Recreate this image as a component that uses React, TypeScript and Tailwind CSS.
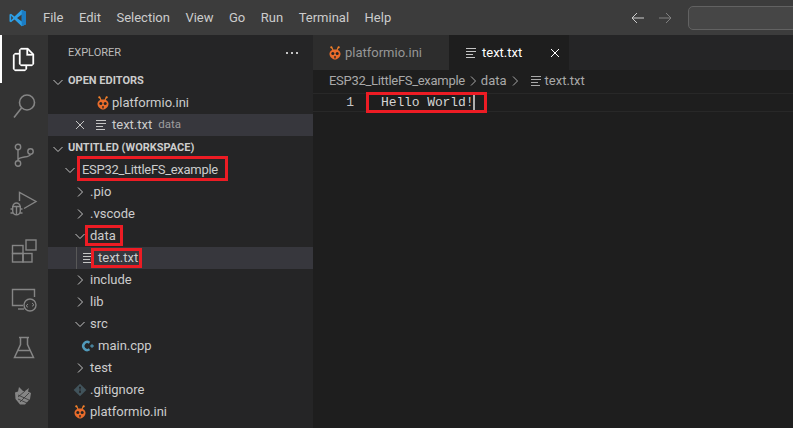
import React from "react";

const ui = "font-['Roboto','Noto_Sans',sans-serif]";

const Chevron = ({ open, className = "" }: { open?: boolean; className?: string }) => (
  <svg width="16" height="16" viewBox="0 0 16 16" fill="none" stroke="#c5c5c5" strokeWidth="1" className={`shrink-0 ${className}`}>
    {open ? <path d="M3.500 6l4.500 4.500L12.500 6" /> : <path d="M6 3.500l4.500 4.500L6 12.500" />}
  </svg>
);

const AntIcon = ({ size = 16 }: { size?: number }) => (
  <svg width={size} height={size} viewBox="0 0 16 16" className="shrink-0">
    <path d="M4.500 2L6 5M11.500 2L10 5" stroke="#f5822a" strokeWidth="1.100" fill="none" />
    <circle cx="4.300" cy="2.300" r="1.100" fill="#f5822a" />
    <circle cx="11.700" cy="2.300" r="1.100" fill="#f5822a" />
    <path d="M8 4.500C4.500 4.500 2.500 6.500 2.500 9c0 2.800 3 5.500 5.500 5.500s5.500-2.700 5.500-5.500c0-2.500-2-4.500-5.500-4.500z" fill="#ea6c2b" />
    <circle cx="5.800" cy="8.500" r="1.500" fill="#252526" />
    <circle cx="10.200" cy="8.500" r="1.500" fill="#252526" />
    <rect x="7.300" y="11" width="1.400" height="2.400" fill="#252526" />
  </svg>
);

const TextIcon = ({ color = "#c5c5c5" }: { color?: string }) => (
  <svg width="16" height="16" viewBox="0 0 16 16" fill="none" stroke={color} strokeWidth="1" className="shrink-0">
    <path d="M3 3.500h10M3 6.500h10M3 9.500h7M3 12.500h9" />
  </svg>
);

const CppIcon = () => (
  <svg width="16" height="16" viewBox="0 0 16 16" fill="none" className="shrink-0">
    <path d="M9.500 4.700A4 4 0 1 0 9.500 11.300" stroke="#519aba" strokeWidth="2.400" />
    <path d="M10 8h4M12 6.200v3.600" stroke="#519aba" strokeWidth="1.200" />
  </svg>
);

const GitIcon = () => (
  <svg width="16" height="16" viewBox="0 0 16 16" className="shrink-0">
    <rect x="3.500" y="3.500" width="9" height="9" transform="rotate(45 8 8)" fill="#41535b" />
    <circle cx="8" cy="5.500" r="1" fill="#252526" />
    <circle cx="8" cy="10" r="1" fill="#252526" />
    <path d="M8 5.500V10" stroke="#252526" strokeWidth="0.800" />
  </svg>
);

const activity = [
  {
    active: true,
    icon: (
      <path d="M18 3h-7l-2 2v3H5L3 10v14l2 2h10l2-2v-3h5l2-2V9zM18 5.200L21.800 9H18zM15.500 24.500h-11v-15H9V19l2 2h4.500zM22.500 19.500h-12v-15H16.500V10.500h6z" fill="#fff" stroke="#fff" strokeWidth="0.300" />
    ),
  },
  { icon: <g fill="none" strokeWidth="1.600"><circle cx="17" cy="9.500" r="7.500" /><path d="M11.500 15L4 24.500" /></g> },
  { icon: <g fill="none" strokeWidth="1.400"><circle cx="8" cy="6" r="2.700" /><circle cx="8" cy="22.500" r="2.700" /><circle cx="20.500" cy="10.500" r="2.700" /><path d="M8 8.700v11M8 19c0-4 12.500-2 12.500-5.800" /></g> },
  { icon: <g fill="none" strokeWidth="1.400"><path d="M9.500 12V3.500L26 12.500l-12 7" /><path d="M3 17.500a3.500 3.500 0 0 1 7 0" /><path d="M2.700 17.500h7.600v4.500a3.800 3.800 0 0 1-7.600 0zM6.500 17.500v8M0.500 20h2.200M10.300 20h2.200M0.500 24h2.500M10 24h2.500" /></g> },
  { icon: <g fill="none" strokeWidth="1.400"><rect x="2.500" y="8.500" width="10.500" height="8" /><rect x="2.500" y="16.500" width="10.500" height="8.500" /><rect x="13" y="16.500" width="9" height="8.500" /><rect x="16" y="3" width="10" height="10" /></g> },
  { icon: <g fill="none" strokeWidth="1.400"><path d="M13 20.500H2.500v-16h22V12" /><path d="M8 24h6" /><circle cx="20" cy="20" r="6" /><path d="M18 19l-2 1.800 2 1.500M22 18l2 1.800-2 1.500" strokeWidth="1" /></g> },
  { icon: <g fill="none" strokeWidth="1.500"><path d="M9 4.500h10M10.500 4.500v7L4.500 24.500h19l-6-13v-7M8 17.500h12" /></g> },
  {
    icon: (
      <g stroke="none" fill="#858585">
        <path d="M5 11.500l3-1 1-4.500 4 4 2 0 4-3-1 3.500 3 1.500-1 6-5 5.500h-5l-4.500-5.500z" />
        <path d="M8 14l11 5M8 18l9 4M10 21l9-9M8 16l7-6" stroke="#333333" strokeWidth="0.800" fill="none" />
      </g>
    ),
  },
];

type Row = { label: string; depth: number; kind: "closed" | "open" | "text" | "cpp" | "git" | "ant"; selected?: boolean };

const tree: Row[] = [
  { label: ".pio", depth: 1, kind: "closed" },
  { label: ".vscode", depth: 1, kind: "closed" },
  { label: "data", depth: 1, kind: "open" },
  { label: "text.txt", depth: 2, kind: "text", selected: true },
  { label: "include", depth: 1, kind: "closed" },
  { label: "lib", depth: 1, kind: "closed" },
  { label: "src", depth: 1, kind: "open" },
  { label: "main.cpp", depth: 2, kind: "cpp" },
  { label: "test", depth: 1, kind: "closed" },
  { label: ".gitignore", depth: 1, kind: "git" },
  { label: "platformio.ini", depth: 1, kind: "ant" },
];

const TreeRow = ({ row }: { row: Row }) => (
  <div className={`relative flex h-[22px] items-center gap-[2px] text-[13px] ${row.depth === 2 ? "pl-[32px]" : "pl-[24px]"} ${row.selected ? "bg-[#37373d]" : ""}`}>
    {row.selected && <i className="absolute left-[28px] top-0 h-full w-px bg-[#585858]" />}
    {row.kind === "closed" && <Chevron />}
    {row.kind === "open" && <Chevron open />}
    {row.kind === "text" && <TextIcon />}
    {row.kind === "cpp" && <CppIcon />}
    {row.kind === "git" && <GitIcon />}
    {row.kind === "ant" && <AntIcon />}
    <span>{row.label}</span>
  </div>
);

const redBox = "absolute border-[3px] border-[#ed1c24]";

export default function App() {
  return (
    <div className={`relative flex h-[428px] w-[793px] flex-col overflow-hidden bg-[#1e1e1e] text-[#cccccc] ${ui}`}>
      {/* title bar */}
      <div className="flex h-[35px] shrink-0 items-center bg-[#3c3c3c] text-[13px]">
        <div className="flex w-[35px] justify-center pl-[1px]">
          <svg width="18" height="18" viewBox="0 0 18 18">
            <path d="M12.700.700L17 2.800v12.400l-4.300 2.100L5.500 10.500 2 13.200.500 12.500V5.500L2 4.800l3.500 2.700z" fill="#2d9fe6" />
            <path d="M12.800 5.500L8 9l4.800 3.500zM2.200 6.800v4.400L4.200 9z" fill="#3c3c3c" />
            <path d="M12.700.700L17 2.800v12.400l-4.300 2.100z" fill="#1b7cc4" />
          </svg>
        </div>
        <div className="flex items-center gap-[15.500px] pl-[8px] text-[#cccccc]">
          {["File", "Edit", "Selection", "View", "Go", "Run", "Terminal", "Help"].map((m) => (
            <span key={m}>{m}</span>
          ))}
        </div>
        <div className="ml-auto flex items-center">
          <svg width="16" height="16" viewBox="0 0 16 16" fill="none" stroke="#cccccc" className="mr-[11px]">
            <path d="M14 8H2.500M7 3L2 8l5 5" />
          </svg>
          <svg width="16" height="16" viewBox="0 0 16 16" fill="none" stroke="#808080" className="mr-[15px]">
            <path d="M2 8h11.500M9 3l5 5-5 5" />
          </svg>
          <div className="mr-[-20px] h-[24px] w-[125px] rounded-[5px] border border-[#626262] bg-[#464646]" />
        </div>
      </div>

      <div className="flex min-h-0 flex-1">
        {/* activity bar */}
        <div className="flex w-[48px] shrink-0 flex-col bg-[#333333]">
          {activity.map((a, i) => (
            <div
              key={i}
              className={`flex h-[48px] items-center justify-center ${a.active ? "border-l-2 border-white pr-[2px]" : ""}`}
            >
              <svg width="28" height="28" viewBox="0 0 28 28" stroke="#858585">
                {a.icon}
              </svg>
            </div>
          ))}
        </div>

        {/* side bar */}
        <div className="flex w-[265px] shrink-0 flex-col bg-[#252526]">
          <div className="flex h-[35px] items-center justify-between pl-[20px] pr-[15px] pt-[1px] text-[11px] text-[#bbbbbb]">
            <span>EXPLORER</span>
            <span className="flex gap-[3px]">
              <i className="h-[2px] w-[2px] bg-[#c5c5c5]" />
              <i className="h-[2px] w-[2px] bg-[#c5c5c5]" />
              <i className="h-[2px] w-[2px] bg-[#c5c5c5]" />
            </span>
          </div>
          <div className="flex h-[22px] items-center gap-[2px] pl-[2px] pt-[1px] text-[11px] font-bold">
            <Chevron open />
            <span>OPEN EDITORS</span>
          </div>
          <div className="flex h-[22px] items-center gap-[1px] pl-[47px] text-[13px]">
            <AntIcon />
            <span>platformio.ini</span>
          </div>
          <div className="flex h-[22px] items-center gap-[3px] bg-[#37373d] pl-[45px] text-[13px]">
            <svg width="16" height="16" viewBox="0 0 16 16" stroke="#c5c5c5" className="absolute left-[72px] shrink-0">
              <path d="M4 4l8 8M12 4l-8 8" />
            </svg>
            <TextIcon />
            <span>text.txt</span>
            <span className="ml-[3px] text-[11.500px] text-[#9d9d9d]">data</span>
          </div>
          <div className="mt-[1px] flex h-[22px] items-center gap-[2px] pl-[2px] pt-[1px] text-[11px] font-bold">
            <Chevron open />
            <span>UNTITLED (WORKSPACE)</span>
          </div>
          <div className="flex h-[22px] items-center gap-[4px] pl-[14px] text-[13px]">
            <Chevron open />
            <span className="tracking-[-0.3px]">ESP32_LittleFS_example</span>
          </div>
          {tree.map((row) => (
            <TreeRow key={row.label} row={row} />
          ))}
        </div>

        {/* editor */}
        <div className="flex min-w-0 flex-1 flex-col">
          <div className="flex h-[35px] shrink-0 bg-[#252526] text-[13px]">
            <div className="flex w-[136px] items-center gap-[2px] bg-[#2d2d2d] pl-[14px] text-[#969696]">
              <AntIcon />
              <span>platformio.ini</span>
            </div>
            <div className="flex w-[120px] items-center gap-[3px] bg-[#1e1e1e] pl-[14px] text-white">
              <TextIcon />
              <span>text.txt</span>
              <svg width="16" height="16" viewBox="0 0 16 16" stroke="#ffffff" className="ml-auto mr-[6px]">
                <path d="M4 4l8 8M12 4l-8 8" />
              </svg>
            </div>
          </div>
          <div className="flex h-[22px] shrink-0 items-center pl-[16px] text-[13px] text-[#a9a9a9]">
            <span className="tracking-[-0.3px]">ESP32_LittleFS_example</span>
            <svg width="16" height="16" viewBox="0 0 16 16" fill="none" stroke="#a9a9a9"><path d="M6 3.500l4.500 4.500L6 12.500" /></svg>
            <span>data</span>
            <svg width="16" height="16" viewBox="0 0 16 16" fill="none" stroke="#a9a9a9"><path d="M6 3.500l4.500 4.500L6 12.500" /></svg>
            <span className="ml-[5px]"><TextIcon color="#a9a9a9" /></span>
            <span className="ml-[1px]">text.txt</span>
          </div>
          <div className="mt-[1px] flex h-[19px] items-center border-y border-[#282828] font-['Liberation_Mono',monospace] text-[13px]">
            <span className="w-[42px] pr-[1px] text-right text-[#c6c6c6]">1</span>
            <span className="ml-[26px] tracking-[-0.1px] text-[#d4d4d4]">Hello World!</span>
            <span className="h-[18px] w-[2px] bg-[#aeafad]" />
          </div>
        </div>
      </div>

      {/* red annotation boxes */}
      <div className={`${redBox} left-[77px] top-[156px] h-[25px] w-[151px]`} />
      <div className={`${redBox} left-[85px] top-[225px] h-[21px] w-[38px]`} />
      <div className={`${redBox} left-[91px] top-[248px] h-[20px] w-[51px]`} />
      <div className={`${redBox} left-[366px] top-[92px] h-[21px] w-[121px]`} />
    </div>
  );
}
